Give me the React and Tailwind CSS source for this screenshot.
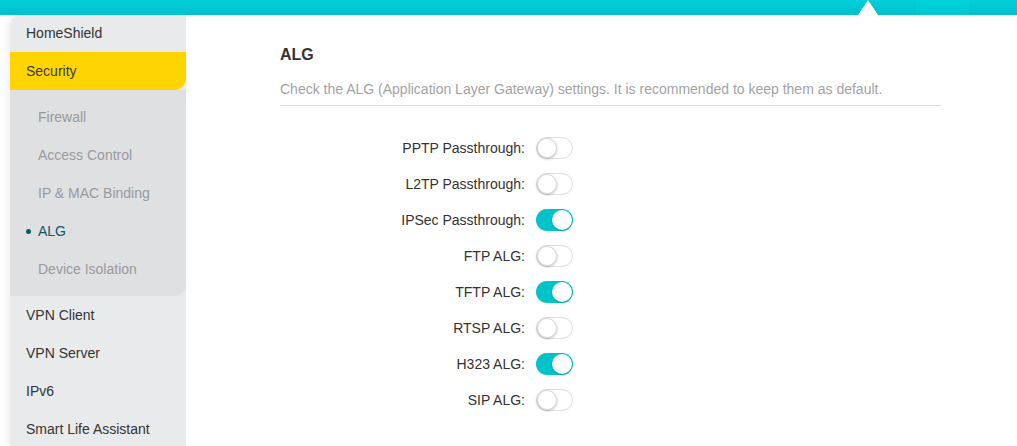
import React from "react";

const rows = [
  ["PPTP Passthrough:", false],
  ["L2TP Passthrough:", false],
  ["IPSec Passthrough:", true],
  ["FTP ALG:", false],
  ["TFTP ALG:", true],
  ["RTSP ALG:", false],
  ["H323 ALG:", true],
  ["SIP ALG:", false],
];

function Toggle({ on }) {
  return on ? (
    <div className="relative w-[37px] h-[22px] rounded-full bg-[#00c4c9]">
      <div className="absolute right-[1px] top-[1px] w-[20px] h-[20px] rounded-full bg-white shadow-[0_1px_2px_rgba(0,0,0,0.25)]" />
    </div>
  ) : (
    <div className="relative w-[37px] h-[22px] rounded-full bg-white border border-[#dedede]">
      <div className="absolute left-[0px] top-[0px] w-[20px] h-[20px] rounded-full bg-white border border-[#d8d8d8] shadow-[0_1px_3px_rgba(0,0,0,0.25)]" />
    </div>
  );
}

export default function App() {
  const sub = ["Firewall", "Access Control", "IP & MAC Binding", "ALG", "Device Isolation"];
  const after = ["VPN Client", "VPN Server", "IPv6", "Smart Life Assistant"];
  return (
    <div className="w-[1017px] h-[446px] overflow-hidden bg-white" style={{ fontFamily: '"Liberation Sans", Arial, sans-serif' }}>
      <div className="relative h-[15px] bg-gradient-to-b from-[#00cfd9] to-[#00bfcc] flex">
        <div className="absolute left-[916px] top-0 w-[53px] h-[15px] bg-gradient-to-b from-[#00d3dc] to-[#00c6d1]" />
        <svg className="absolute left-[857px] top-0" width="22" height="15" viewBox="0 0 22 15">
          <polygon points="11,0 21,15 1,15" fill="#ffffff" />
        </svg>
      </div>
      <div className="flex">
        <div className="ml-[10px] w-[176px] h-[431px] bg-[#e9eaec] rounded-tl-[10px] shadow-[-3px_0_6px_rgba(0,0,0,0.06)] text-[14px] text-[#333]">
          <div className="h-[37px] flex items-center pl-[16px]">HomeShield</div>
          <div className="h-[38px] flex items-center pl-[16px] bg-[#ffd400] rounded-br-[12px] text-[#3a3a3a]">Security</div>
          <div className="bg-[#dfe0e2] rounded-br-[12px] py-[8px]">
            {sub.map((s) => (
              <div key={s} className={"h-[38px] flex items-center pl-[28px] relative " + (s === "ALG" ? "text-[#0b5966]" : "text-[#979a9e]")}>
                {s === "ALG" && <span className="absolute left-[16px] w-[5px] h-[5px] rounded-full bg-[#0b5966]" />}
                {s}
              </div>
            ))}
          </div>
          {after.map((s) => (
            <div key={s} className="h-[38px] flex items-center pl-[16px]">{s}</div>
          ))}
        </div>
        <div className="flex-1 pl-[94px]">
          <div className="w-[661px]">
            <div className="pt-[30px] text-[16px] font-bold text-[#333] leading-[20px]">ALG</div>
            <div className="mt-[16px] text-[14px] text-[#a3a3a3] leading-[16px] pb-[8px] border-b border-[#dcdcdc]">
              Check the ALG (Application Layer Gateway) settings. It is recommended to keep them as default.
            </div>
            <div className="pt-[24px] flex flex-col">
              {rows.map(([l, on]) => (
                <div key={l} className="h-[36px] flex items-center">
                  <div className="w-[256px] text-right text-[14px] text-[#333] pr-[11px]">{l}</div>
                  <Toggle on={on} />
                </div>
              ))}
            </div>
          </div>
        </div>
      </div>
    </div>
  );
}
